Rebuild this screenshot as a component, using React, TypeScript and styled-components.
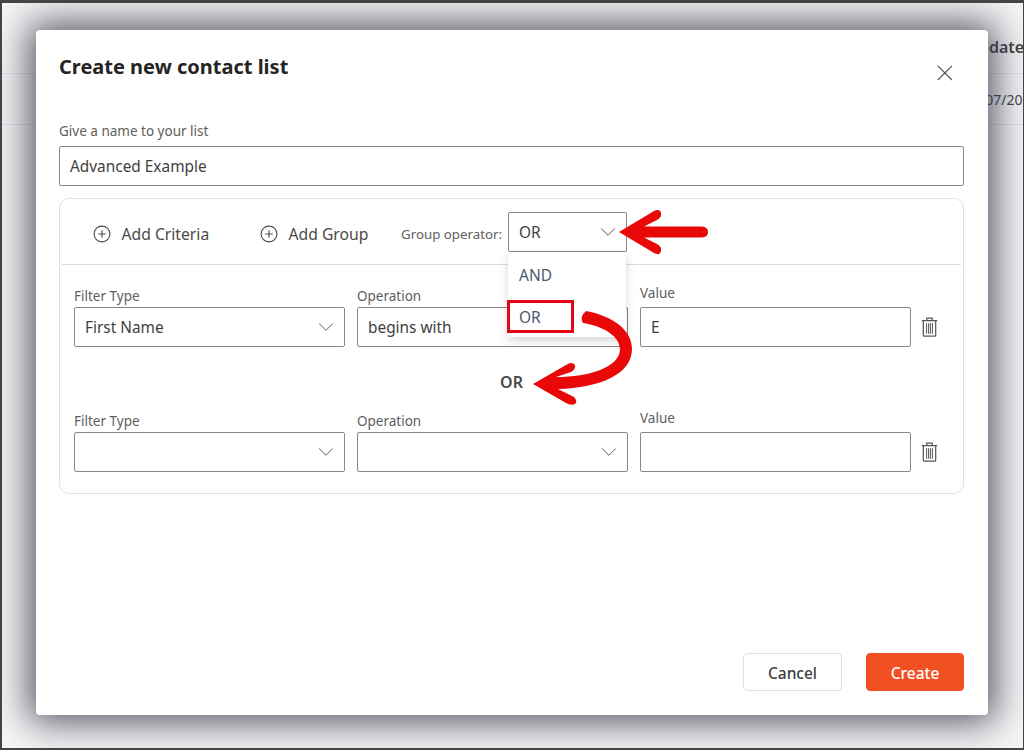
import React from "react";
import styled, { createGlobalStyle } from "styled-components";

const Global = createGlobalStyle`
  html, body { margin: 0; padding: 0; background: #fff; }
  body { font-family: "Noto Sans", "Open Sans", sans-serif; color: #323130; }
`;

const Page = styled.div`
  position: relative;
  width: 1024px;
  height: 750px;
  box-sizing: border-box;
  overflow: hidden;
  background: #f6f6f7;
  border-style: solid;
  border-color: #444;
  border-width: 3px 1px 2px 2px;
`;

const HeaderRow = styled.div`
  box-sizing: border-box;
  height: 71px;
  padding: 33px 0 0 965px;
  border-bottom: 1px solid #e3e3e6;
  white-space: nowrap;
  font-size: 16px;
  line-height: 22px;
  font-weight: 600;
  color: #444;
`;

const DataRow = styled.div`
  display: flex;
  align-items: center;
  box-sizing: border-box;
  height: 51px;
  padding-left: 962px;
  border-bottom: 1px solid #e3e3e6;
  white-space: nowrap;
  font-size: 14px;
  color: #444;
`;

const Overlay = styled.div`
  position: absolute;
  left: 34px;
  top: 27px;
`;

const Modal = styled.div`
  display: flex;
  flex-direction: column;
  box-sizing: border-box;
  width: 952px;
  height: 685px;
  padding: 22px 24px 24px 23px;
  background: #fff;
  border-radius: 4px;
  box-shadow: 0 0 36px 8px rgba(50, 50, 70, 0.8);
`;

const Header = styled.div`
  display: flex;
  justify-content: space-between;
  height: 70px;
`;

const Title = styled.h2`
  margin: 0;
  font-size: 20px;
  line-height: 30px;
  font-weight: 700;
  color: #252423;
`;

const CloseButton = styled.button`
  display: flex;
  width: 18px;
  height: 18px;
  margin: 12px 10px 0 0;
  padding: 0;
  border: 0;
  background: none;
  color: #555;
`;

const Label = styled.label<{ $raised?: boolean }>`
  display: block;
  height: 18px;
  margin-bottom: ${(p) => (p.$raised ? 5 : 2)}px;
  margin-top: ${(p) => (p.$raised ? -3 : 0)}px;
  font-size: 13.5px;
  line-height: 18px;
  color: #605e5c;
`;

const NameLabel = styled(Label)`
  margin-bottom: 6px;
`;

const Field = styled.div`
  display: flex;
  align-items: center;
  justify-content: space-between;
  box-sizing: border-box;
  height: 40px;
  padding: 0 10px;
  background: #fff;
  border: 1px solid #8a8886;
  border-radius: 2px;
  font-size: 15.4px;
  color: #3f3e3d;
`;

const Criteria = styled.div`
  position: relative;
  box-sizing: border-box;
  height: 296px;
  margin-top: 12px;
  padding: 0 2px;
  border: 1px solid #e1e1e1;
  border-radius: 10px;
`;

const Toolbar = styled.div`
  display: flex;
  align-items: center;
  height: 66px;
  padding: 4px 0 0 31px;
  box-sizing: border-box;
  border-bottom: 1px solid #dcdcdc;
`;

const ToolButton = styled.div<{ $width: number }>`
  display: flex;
  align-items: center;
  gap: 10.5px;
  width: ${(p) => p.$width}px;
  color: #4b4a49;
  font-size: 15.7px;
`;

const OperatorLabel = styled.span`
  width: 107px;
  font-size: 13.3px;
  color: #605e5c;
`;

const OperatorField = styled(Field)`
  width: 119px;
  margin-top: -3px;
`;

const Row = styled.div`
  display: grid;
  grid-template-columns: repeat(3, 271px) 18px;
  column-gap: 12px;
  align-items: end;
  margin-left: 12px;
`;

const FirstRow = styled(Row)`
  margin-top: 22px;
`;

const Separator = styled.div`
  display: flex;
  align-items: center;
  justify-content: center;
  height: 70px;
  font-size: 16px;
  font-weight: 600;
  color: #4a4948;
`;

const SecondRow = styled(Row)`
  margin-top: -5px;
`;

const TrashButton = styled.div`
  display: flex;
  justify-content: center;
  width: 18px;
  height: 40px;
  margin-left: -3px;
  align-items: center;
  color: #555;
`;

const Menu = styled.div`
  position: absolute;
  left: 448px;
  top: 53px;
  display: flex;
  flex-direction: column;
  width: 118px;
  height: 85px;
  padding-top: 2px;
  box-sizing: border-box;
  background: #fff;
  border-radius: 0 0 3px 3px;
  box-shadow: 0 4px 10px rgba(0, 0, 0, 0.16);
`;

const MenuItem = styled.div<{ $height: number }>`
  display: flex;
  align-items: center;
  height: ${(p) => p.$height}px;
  padding-left: 11px;
  font-size: 15.5px;
  color: #4c5a6e;
`;

const Highlight = styled.div`
  position: absolute;
  left: -1px;
  top: 48px;
  width: 67px;
  height: 33px;
  box-sizing: border-box;
  border: 3px solid #e30613;
`;

const Annotation = styled.svg`
  position: absolute;
  left: 0;
  top: 0;
  pointer-events: none;
`;

const Footer = styled.div`
  display: flex;
  justify-content: flex-end;
  gap: 24px;
  margin-top: auto;
`;

const Button = styled.button<{ $primary?: boolean }>`
  width: ${(p) => (p.$primary ? 98 : 99)}px;
  height: 38px;
  padding: 1px 0 0;
  border: 1px solid ${(p) => (p.$primary ? "#f25022" : "#e1e1e1")};
  border-radius: 4px;
  background: ${(p) => (p.$primary ? "#f25022" : "#fff")};
  color: ${(p) => (p.$primary ? "#fff" : "#3f3e3d")};
  font-family: inherit;
  font-size: 15.5px;
  font-weight: 500;
`;

const Chevron = () => (
  <svg width="16" height="10" viewBox="0 0 16 10" fill="none" stroke="#605e5c" strokeWidth="1">
    <path d="M1.2 1.5 8 8.3l6.8-6.8" />
  </svg>
);

const PlusCircle = () => (
  <svg width="18" height="18" viewBox="0 0 18 18" fill="none" stroke="#4b4a49" strokeWidth="1.1">
    <circle cx="9" cy="9" r="7.9" />
    <path d="M9 5.2v7.6M5.2 9h7.6" />
  </svg>
);

const Close = () => (
  <svg width="18" height="18" viewBox="0 0 18 18" fill="none" stroke="currentColor" strokeWidth="1.2">
    <path d="M1.8 1.8 16 16M16 1.8 1.8 16" />
  </svg>
);

const Trash = () => (
  <svg width="17" height="20" viewBox="0 0 17 20" fill="none" stroke="currentColor" strokeWidth="1.2">
    <path d="M.8 3.6h15.4M5.8 3.4V1.2h5.4v2.2" />
    <path d="M2.3 3.8v14.4q0 1 1 1h10.4q1 0 1-1V3.8" />
    <path d="M5.6 6.2v10.6M7.6 6.2v10.6M9.4 6.2v10.6M11.4 6.2v10.6" strokeWidth="1" />
  </svg>
);

type Criterion = { type: string; op: string; value: string };

const FilterRow = ({ c, as: Wrap }: { c: Criterion; as: typeof Row }) => (
  <Wrap>
    <div>
      <Label>Filter Type</Label>
      <Field>
        {c.type}
        <span />
        <Chevron />
      </Field>
    </div>
    <div>
      <Label>Operation</Label>
      <Field>
        {c.op}
        <span />
        <Chevron />
      </Field>
    </div>
    <div>
      <Label $raised>Value</Label>
      <Field>{c.value}</Field>
    </div>
    <TrashButton>
      <Trash />
    </TrashButton>
  </Wrap>
);

export default function App() {
  return (
    <Page>
      <Global />
      <HeaderRow>Updated</HeaderRow>
      <DataRow>05/07/2021</DataRow>
      <Overlay>
        <Modal>
          <Header>
            <Title>Create new contact list</Title>
            <CloseButton aria-label="Close">
              <Close />
            </CloseButton>
          </Header>
          <NameLabel>Give a name to your list</NameLabel>
          <Field>Advanced Example</Field>
          <Criteria>
            <Toolbar>
              <ToolButton $width={167}>
                <PlusCircle />
                Add Criteria
              </ToolButton>
              <ToolButton $width={141}>
                <PlusCircle />
                Add Group
              </ToolButton>
              <OperatorLabel>Group operator:</OperatorLabel>
              <OperatorField>
                OR
                <Chevron />
              </OperatorField>
            </Toolbar>
            <FilterRow as={FirstRow} c={{ type: "First Name", op: "begins with", value: "E" }} />
            <Separator>OR</Separator>
            <FilterRow as={SecondRow} c={{ type: "", op: "", value: "" }} />
            <Menu>
              <MenuItem $height={43}>AND</MenuItem>
              <MenuItem $height={41}>OR</MenuItem>
              <Highlight />
            </Menu>
          </Criteria>
          <Footer>
            <Button>Cancel</Button>
            <Button $primary>Create</Button>
          </Footer>
        </Modal>
      </Overlay>
      <Annotation width="1024" height="750" viewBox="2 3 1024 750">
        <g fill="#e80808">
          <path d="M619 232 654 211Q660 208 661 213Q662 217 657 220L644 226.5H702Q708 227 708 232Q708 237 702 237.5H644L657 244Q662 247 661 251Q660 256 654 253Z" />
          <path d="M586 311C613 316 632 330 632 349C632 374 600 388 558 389L574 397Q578 401 575 404Q571 406 566 403L533 384 566 365Q572 361 575 365Q576 369 571 372L556 377C590 377 619 367 620 350C620 337 606 327 583 323Q579 317 586 311Z" />
        </g>
      </Annotation>
    </Page>
  );
}
